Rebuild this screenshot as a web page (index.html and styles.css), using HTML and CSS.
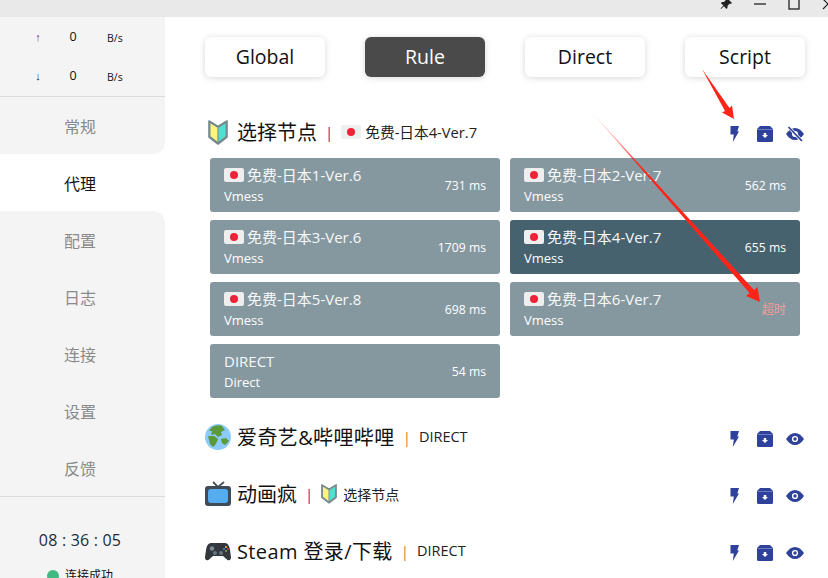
FILE: index.html
```html
<!DOCTYPE html>
<html lang="zh">
<head>
<meta charset="utf-8">
<title>Clash</title>
<link rel="stylesheet" href="styles.css">
</head>
<body>
<svg width="0" height="0" class="defs">
  <defs>
    <symbol id="flag" viewBox="0 0 20 14"><rect width="20" height="14" rx="2" fill="#eeeeee"/><circle cx="10" cy="7" r="4" fill="#ee2238"/></symbol>
    <symbol id="leaf" viewBox="0 0 20 26"><path d="M1 2 10 7.500 19 2V18L10 25 1 18Z" fill="#7f9296" stroke="#74888c" stroke-width="1.600" stroke-linejoin="round"/><path d="M2.500 4.500 9.400 8.800V22.500L2.500 17.200Z" fill="#fdf47c"/><path d="M17.500 4.500 10.600 8.800V22.500L17.500 17.200Z" fill="#4fe0d2"/></symbol>
    <symbol id="bolt" viewBox="0 0 9 16"><path d="M0.500 0H9L7.300 5.500H9L2.800 16 3.800 8.500H0.500Z" fill="#2f429b"/></symbol>
    <symbol id="box" viewBox="0 0 16 16"><path d="M3 0H13L16 3V14.500Q16 16 14.500 16H1.500Q0 16 0 14.500V3Z" fill="#2f429b"/><path d="M0.500 3.500H15.500" stroke="#7c8ac4" stroke-width="0.800"/><path d="M6.800 7H9.200V9H11L8 12 5 9H6.800Z" fill="#ffffff"/></symbol>
    <symbol id="eye" viewBox="0 0 18 12"><path d="M0 6Q4 0 9 0T18 6Q14 12 9 12T0 6Z" fill="#2f429b"/><circle cx="9" cy="6" r="3.100" fill="#ffffff"/><circle cx="9" cy="6" r="1.700" fill="#2f429b"/></symbol>
    <symbol id="eyeoff" viewBox="0 0 18 16"><path d="M0 8Q4 2 9 2T18 8Q14 14 9 14T0 8Z" fill="#2f429b"/><circle cx="9" cy="8" r="3" fill="#ffffff"/><path d="M2.500 1 16 15" stroke="#ffffff" stroke-width="3.200"/><path d="M2.500 1 16 15" stroke="#2f429b" stroke-width="1.800"/></symbol>
  </defs>
</svg>

<header class="titlebar">
  <svg class="win-icon" viewBox="0 0 12 12"><path d="M7 0 12 5 10.800 6 9.800 5.500 7.500 8 7.500 10 6.500 11 4 8.200 1 11 .6 10.600 3.400 7.500.8 5 2 4H4L6.300 1.500 6 1Z" fill="#222"/></svg>
  <svg class="win-icon" viewBox="0 0 12 12"><path d="M0 6H12" stroke="#222" stroke-width="1.300"/></svg>
  <svg class="win-icon" viewBox="0 0 12 12"><rect x="1" y="1" width="10" height="10" fill="none" stroke="#222" stroke-width="1.300"/></svg>
  <svg class="win-icon" viewBox="0 0 12 12"><path d="M1 1 11 11M11 1 1 11" stroke="#222" stroke-width="1.200"/></svg>
</header>

<div class="app">
  <aside class="sidebar">
    <div class="traffic">
      <div class="traffic-row"><span class="arrow up">↑</span><span class="num">0</span><span class="unit">B/s</span></div>
      <div class="traffic-row"><span class="arrow">↓</span><span class="num">0</span><span class="unit">B/s</span></div>
    </div>
    <nav class="nav">
      <a class="nav-item before-active">常规</a>
      <a class="nav-item active">代理</a>
      <a class="nav-item after-active">配置</a>
      <a class="nav-item">日志</a>
      <a class="nav-item">连接</a>
      <a class="nav-item">设置</a>
      <a class="nav-item">反馈</a>
    </nav>
    <div class="status">
      <div class="clock">08 : 36 : 05</div>
      <div class="conn"><span class="dot"></span>连接成功</div>
    </div>
  </aside>

  <main class="main">
    <div class="modes">
      <button class="mode">Global</button>
      <button class="mode selected">Rule</button>
      <button class="mode">Direct</button>
      <button class="mode">Script</button>
    </div>

    <section class="group first">
      <div class="group-head">
        <svg class="leaf-big"><use href="#leaf"/></svg>
        <span class="g-name">选择节点</span>
        <span class="sep purple">|</span>
        <svg class="flag"><use href="#flag"/></svg>
        <span class="g-now wide">免费-日本4-Ver.7</span>
        <span class="tools">
          <svg class="t-bolt"><use href="#bolt"/></svg>
          <svg class="t-box"><use href="#box"/></svg>
          <svg class="t-eyeoff"><use href="#eyeoff"/></svg>
        </span>
      </div>
      <div class="cards">
        <div class="card"><div class="c-left"><div class="c-name"><svg class="flag"><use href="#flag"/></svg>免费-日本1-Ver.6</div><div class="c-type">Vmess</div></div><div class="c-ms">731 ms</div></div>
        <div class="card"><div class="c-left"><div class="c-name"><svg class="flag"><use href="#flag"/></svg>免费-日本2-Ver.7</div><div class="c-type">Vmess</div></div><div class="c-ms">562 ms</div></div>
        <div class="card"><div class="c-left"><div class="c-name"><svg class="flag"><use href="#flag"/></svg>免费-日本3-Ver.6</div><div class="c-type">Vmess</div></div><div class="c-ms">1709 ms</div></div>
        <div class="card on"><div class="c-left"><div class="c-name"><svg class="flag"><use href="#flag"/></svg>免费-日本4-Ver.7</div><div class="c-type">Vmess</div></div><div class="c-ms">655 ms</div></div>
        <div class="card"><div class="c-left"><div class="c-name"><svg class="flag"><use href="#flag"/></svg>免费-日本5-Ver.8</div><div class="c-type">Vmess</div></div><div class="c-ms">698 ms</div></div>
        <div class="card"><div class="c-left"><div class="c-name"><svg class="flag"><use href="#flag"/></svg>免费-日本6-Ver.7</div><div class="c-type">Vmess</div></div><div class="c-ms timeout">超时</div></div>
        <div class="card"><div class="c-left"><div class="c-name">DIRECT</div><div class="c-type">Direct</div></div><div class="c-ms">54 ms</div></div>
      </div>
    </section>

    <section class="group">
      <div class="group-head">
        <svg class="g-icon" viewBox="0 0 26 26"><circle cx="13" cy="13" r="13" fill="#8ccbfb"/><path d="M7 3Q12 0 17 2L20 6 16 8 17 11 13 13 10 10 6 11 7 7 4 7Z" fill="#5b9a3b"/><path d="M3 12 9 12 13 15 11 20 8 23 5 20Z" fill="#5b9a3b"/><path d="M16 15 21 14 24 17 20 21 17 19Z" fill="#5b9a3b"/></svg>
        <span class="g-name spaced">爱奇艺&amp;哔哩哔哩</span>
        <span class="sep orange">|</span>
        <span class="g-now">DIRECT</span>
        <span class="tools"><svg class="t-bolt"><use href="#bolt"/></svg><svg class="t-box"><use href="#box"/></svg><svg class="t-eye"><use href="#eye"/></svg></span>
      </div>
    </section>

    <section class="group">
      <div class="group-head">
        <svg class="g-icon" viewBox="0 0 26 26"><path d="M8 1 13 6 19 1" fill="none" stroke="#4a5560" stroke-width="1.800"/><rect x="0" y="5" width="26" height="20" rx="3" fill="#404b55"/><rect x="3" y="8" width="20" height="14" rx="3" fill="#55acee"/></svg>
        <span class="g-name">动画疯</span>
        <span class="sep purple">|</span>
        <svg class="leaf-small"><use href="#leaf"/></svg>
        <span class="g-now small">选择节点</span>
        <span class="tools"><svg class="t-bolt"><use href="#bolt"/></svg><svg class="t-box"><use href="#box"/></svg><svg class="t-eye"><use href="#eye"/></svg></span>
      </div>
    </section>

    <section class="group">
      <div class="group-head">
        <svg class="g-icon" viewBox="0 0 26 26"><path d="M6 5H20Q24 5 25 12L26 19Q26 23 22.500 22L18 18H8L3.500 22Q0 23 0 19L1 12Q2 5 6 5Z" fill="#31373d"/><circle cx="7" cy="10.500" r="2.200" fill="#7d8a94"/><circle cx="10" cy="15" r="2" fill="#66757f"/><circle cx="16" cy="15" r="2" fill="#66757f"/><circle cx="21" cy="9" r="1" fill="#f4c534"/><circle cx="19" cy="11" r="1" fill="#3b88c3"/><circle cx="23" cy="11" r="1" fill="#dd2e44"/><circle cx="21" cy="13" r="1" fill="#77b255"/></svg>
        <span class="g-name spaced">Steam 登录/下载</span>
        <span class="sep orange">|</span>
        <span class="g-now">DIRECT</span>
        <span class="tools"><svg class="t-bolt"><use href="#bolt"/></svg><svg class="t-box"><use href="#box"/></svg><svg class="t-eye"><use href="#eye"/></svg></span>
      </div>
    </section>
  </main>
</div>

<svg class="annotation" viewBox="0 0 828 578">
  <defs><linearGradient id="fade" gradientUnits="userSpaceOnUse" x1="588" y1="108" x2="645" y2="171"><stop offset="0" stop-color="#ff2a1a" stop-opacity="0"/><stop offset="1" stop-color="#ff2418"/></linearGradient></defs>
  <path d="M702 69 729.500 108 732 105.500 734 119 722 112.500 725 111Z" fill="#ff2418"/>
  <path d="M588 108 754 290 757.500 287 760 302 746 296 749.500 293Z" fill="url(#fade)"/>
</svg>
</body>
</html>
```
FILE: styles.css
```css
* { box-sizing: border-box; }
html, body { margin: 0; height: 100%; overflow: hidden; }
body {
  width: 828px;
  height: 578px;
  background: #fff;
  color: #111;
  font-family: "Open Sans", "Noto Sans CJK SC", sans-serif;
  position: relative;
}
.defs { position: absolute; }

.titlebar {
  height: 17px;
  background: #e9e9e9;
  display: flex;
  justify-content: flex-end;
  align-items: center;
  gap: 22px;
  margin-right: -6px;
  overflow: hidden;
}
.win-icon { width: 12px; height: 12px; flex: none; margin-top: -10px; }

.app { display: flex; height: 561px; }

.sidebar {
  width: 165px;
  flex: none;
  background: #f4f4f4;
  display: flex;
  flex-direction: column;
}
.traffic { height: 80px; flex: none; border-bottom: 1px solid #dcdcdc; width: 828px; }
.traffic-row {
  height: 39px;
  width: 165px;
  display: flex;
  align-items: center;
  font-size: 12.500px;
}
.arrow { width: 14px; margin-left: 31px; color: #222; text-align: center; font: 11px "Liberation Sans", sans-serif; }
.arrow.up { color: #6a2b9c; }
.num { width: 14px; margin-left: 21px; text-align: center; }
.unit { margin-left: 27px; font-size: 10.500px; margin-top: 2px; }

.nav { flex: none; background: #fff; display: flex; flex-direction: column; }
.nav-item {
  height: 57px;
  padding-right: 5px;
  display: flex;
  align-items: center;
  justify-content: center;
  font-size: 16px;
  color: #8a8a8a;
  background: #f4f4f4;
}
.before-active { border-bottom-right-radius: 12px; }
.after-active { border-top-right-radius: 12px; }
.nav-item.active { background: #fff; color: #111; }

.status { border-top: 1px solid #dcdcdc; flex: none; text-align: center; padding-right: 5px; }
.clock { margin-top: 32px; font-size: 16px; color: #1c2b3a; line-height: 22px; letter-spacing: .2px; }
.conn { margin-top: 17px; font-size: 12px; line-height: 16px; display: flex; align-items: center; justify-content: center; gap: 6px; }
.dot { width: 12px; height: 12px; border-radius: 50%; background: #42b983; }

.main { flex: 1; min-width: 0; overflow: hidden; background: #fff; }

.modes { height: 80px; padding: 20px 23px 0 40px; display: flex; justify-content: space-between; }
.mode {
  width: 120px;
  height: 40px;
  padding: 0 0 2px;
  border: 0;
  border-radius: 6px;
  background: #fff;
  color: #111;
  font: 19.500px "Open Sans", sans-serif;
  box-shadow: 0 1px 6px rgba(0,0,0,.16);
}
.mode.selected { background: #4a4a4a; color: #fff; }

.group { padding: 0 24px 0 40px; margin-top: 20px; }
.group.first { margin-top: 16px; }
.group-head { height: 37px; display: flex; align-items: center; }
.g-icon { width: 26px; height: 26px; flex: none; margin-right: 6px; }
.leaf-big { width: 20px; height: 26px; margin: 0 9px 0 3px; flex: none; }
.g-name { font-size: 20px; white-space: nowrap; }
.g-name.spaced { letter-spacing: .38px; }
.sep { margin: 0 8px 0 8px; font-size: 15px; }
.purple { color: #8a1a88; }
.orange { color: #c8862a; }
.flag { width: 20px; height: 14px; flex: none; margin-right: 3px; }
.group-head .flag { margin-right: 4px; }
.g-now { font-size: 14.500px; white-space: nowrap; color: #222; }
.g-now.wide { font-size: 14.700px; }
.g-now.small { font-size: 14px; }
.leaf-small { width: 16px; height: 21px; margin-right: 6px; flex: none; }
.tools { margin-left: auto; margin-top: 4px; display: flex; align-items: center; }
.t-bolt { width: 9px; height: 16px; margin-right: 18px; }
.t-box { width: 16px; height: 16px; margin-right: 13px; }
.t-eye { width: 18px; height: 12px; }
.t-eyeoff { width: 18px; height: 16px; }

.cards {
  display: grid;
  grid-template-columns: 290px 290px;
  column-gap: 10px;
  row-gap: 8px;
  margin: 8px 0 0 5px;
}
.card {
  height: 54px;
  border-radius: 3px;
  background: #86989f;
  color: #fff;
  display: flex;
  justify-content: space-between;
  align-items: center;
  padding: 0 14px;
}
.card.on { background: #47626f; }
.c-name { font-size: 15px; line-height: 20px; display: flex; align-items: center; color: #f6f8f9; white-space: nowrap; }
.c-type { font-size: 13px; line-height: 18px; margin-top: 2px; }
.c-ms { font-size: 12.200px; }
.c-ms.timeout { color: #f59a9a; }

.annotation { position: absolute; left: 0; top: 0; width: 828px; height: 578px; pointer-events: none; }
```
